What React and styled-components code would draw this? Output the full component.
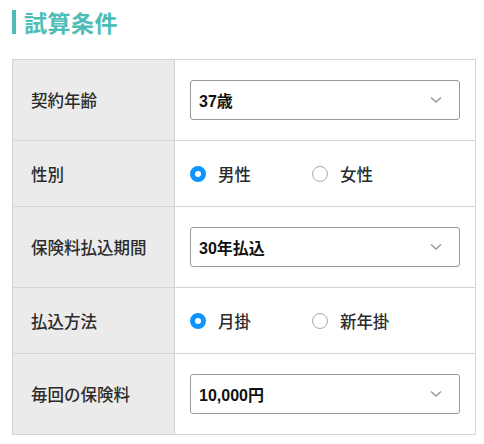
import React, { useState } from "react";
import styled, { createGlobalStyle } from "styled-components";

const GlobalStyle = createGlobalStyle`
  body {
    margin: 0;
    background: #fff;
    font-family: "Noto Sans CJK JP", "Noto Sans", sans-serif;
    color: #333;
  }
`;

const Page = styled.div`
  width: 484px;
  padding: 10px 9px 0 12px;
  box-sizing: border-box;
`;

const Title = styled.h2`
  margin: 0;
  border-left: 4px solid #4dbdb5;
  padding-left: 8px;
  height: 24px;
  display: flex;
  align-items: center;
  font-size: 23px;
  font-weight: 700;
  color: #4dbdb5;
  letter-spacing: 0.5px;
`;

const Table = styled.div`
  margin-top: 25px;
  display: grid;
  grid-template-columns: 162px 1fr;
  border: 1px solid #d4d4d4;
  border-bottom: none;
  width: 464px;
  box-sizing: border-box;
`;

const Label = styled.div`
  background: #ebebeb;
  border-right: 1px solid #d4d4d4;
  border-bottom: 1px solid #d4d4d4;
  display: flex;
  align-items: center;
  padding-left: 18px;
  font-size: 16.5px;
  font-weight: 500;
  color: #2b2b2b;
  height: ${(p) => (p.tall ? "80px" : "65px")};
`;

const Cell = styled.div`
  border-bottom: 1px solid #d4d4d4;
  display: flex;
  align-items: center;
  padding: 0 15px 0 15px;
`;

const SelectBox = styled.div`
  flex: 1;
  height: 40px;
  border: 1px solid #999;
  border-radius: 3px;
  display: flex;
  align-items: center;
  justify-content: space-between;
  padding: 0 17px 0 8px;
  box-sizing: border-box;
  font-size: 16px;
  font-weight: 700;
  color: #111;
  font-family: "Liberation Sans", "Noto Sans CJK JP", sans-serif;
`;

const RadioGroup = styled.div`
  display: flex;
  align-items: center;
`;

const RadioItem = styled.label`
  display: flex;
  align-items: center;
  width: 122px;
  font-size: 16.5px;
  font-weight: 500;
  color: #2b2b2b;
  cursor: pointer;
`;

const Dot = styled.span`
  width: 16px;
  height: 16px;
  border-radius: 50%;
  box-sizing: border-box;
  margin-right: 12px;
  border: ${(p) => (p.checked ? "5px solid #0f93ff" : "1px solid #aaa")};
  background: #fff;
`;

function Chevron() {
  return (
    <svg width="12" height="8" viewBox="0 0 12 8">
      <path d="M1 1.5 L6 6 L11 1.5" fill="none" stroke="#999" strokeWidth="1.5" />
    </svg>
  );
}

function Select({ value }) {
  return (
    <SelectBox>
      <span>{value}</span>
      <Chevron />
    </SelectBox>
  );
}

function Radios({ options, value, onChange }) {
  return (
    <RadioGroup>
      {options.map((o) => (
        <RadioItem key={o} onClick={() => onChange(o)}>
          <Dot checked={value === o} />
          {o}
        </RadioItem>
      ))}
    </RadioGroup>
  );
}

export default function App() {
  const [gender, setGender] = useState("男性");
  const [method, setMethod] = useState("月掛");

  return (
    <Page>
      <GlobalStyle />
      <Title>試算条件</Title>
      <Table>
        <Label tall>契約年齢</Label>
        <Cell>
          <Select value="37歳" />
        </Cell>
        <Label>性別</Label>
        <Cell>
          <Radios options={["男性", "女性"]} value={gender} onChange={setGender} />
        </Cell>
        <Label tall>保険料払込期間</Label>
        <Cell>
          <Select value="30年払込" />
        </Cell>
        <Label>払込方法</Label>
        <Cell>
          <Radios options={["月掛", "新年掛"]} value={method} onChange={setMethod} />
        </Cell>
        <Label tall>毎回の保険料</Label>
        <Cell>
          <Select value="10,000円" />
        </Cell>
      </Table>
    </Page>
  );
}
